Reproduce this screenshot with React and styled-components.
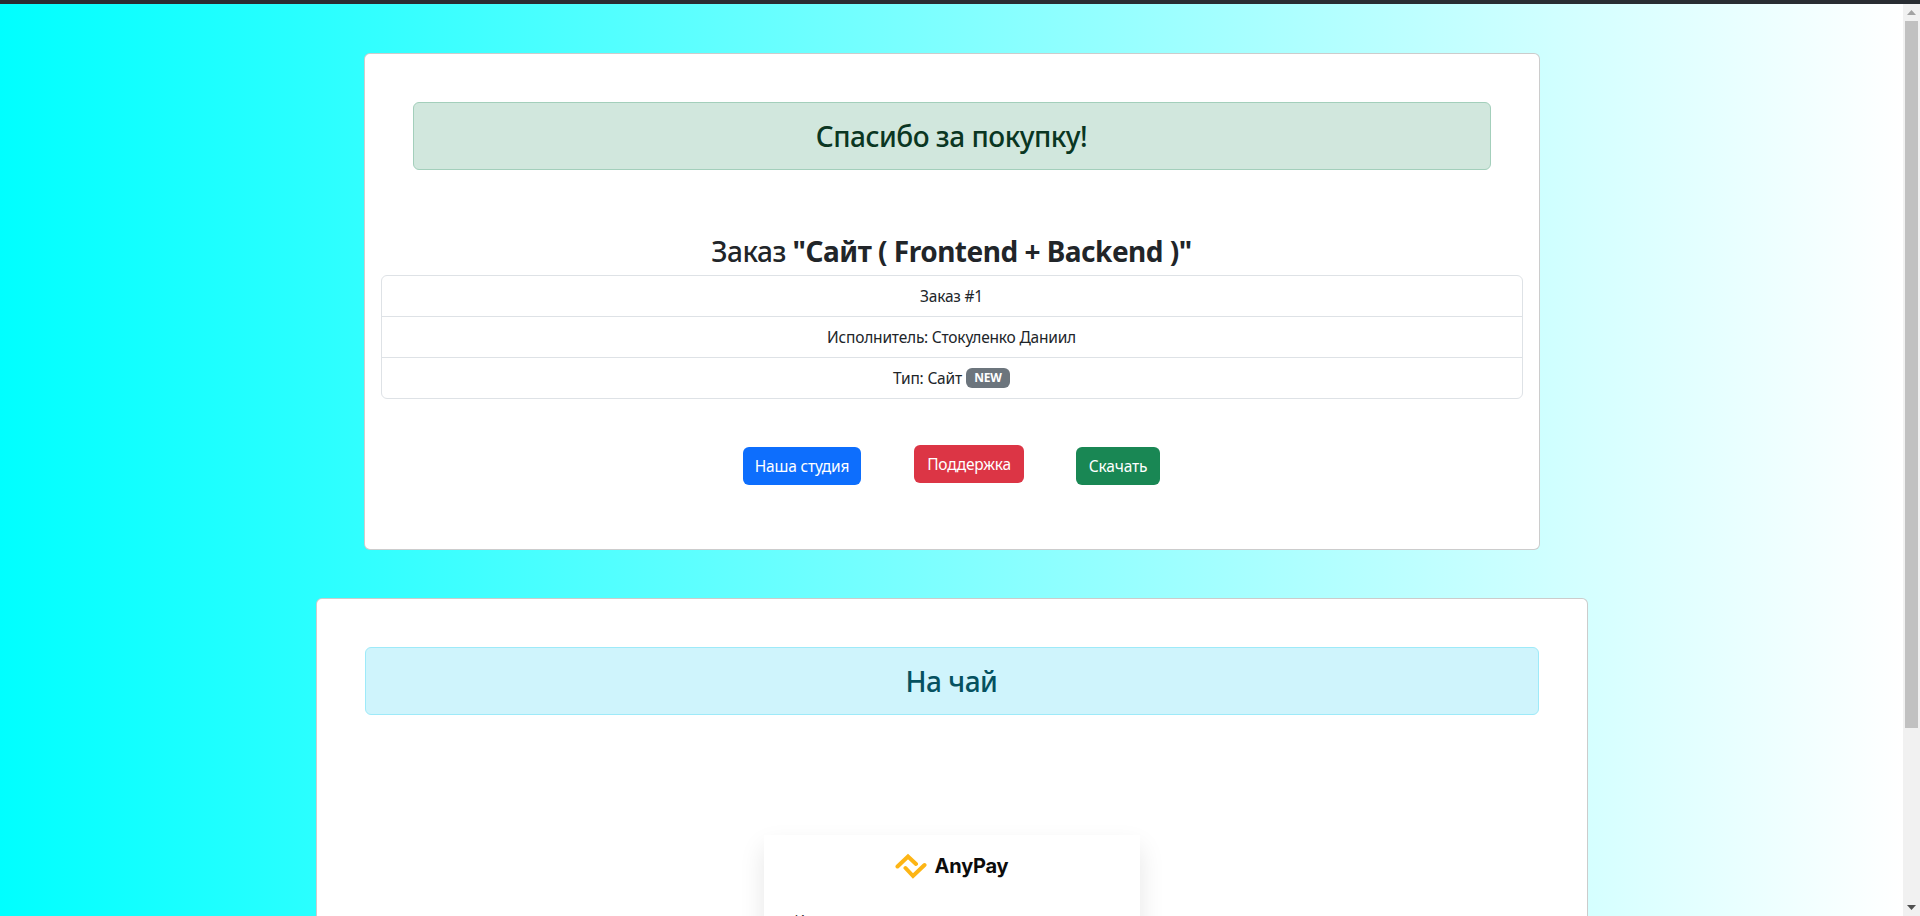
import React from "react";
import styled, { createGlobalStyle } from "styled-components";

const Global = createGlobalStyle`
  html, body { margin: 0; padding: 0; height: 916px; overflow: hidden; }
  * { box-sizing: border-box; }
  body { font-family: "Noto Sans", "Open Sans", sans-serif; color: #212529; font-size: 16px; }
`;

const Shell = styled.div`
  height: 916px;
  display: flex;
  flex-direction: column;
  overflow: hidden;
`;
const TopBar = styled.div`
  height: 4px;
  flex: none;
  background: #292d32;
`;
const Viewport = styled.div`
  flex: 1;
  min-height: 0;
  display: flex;
`;
const Page = styled.main`
  flex: 1;
  min-width: 0;
  overflow: hidden;
  background: linear-gradient(to right, #00ffff, #ffffff);
  padding-top: 49px;
  display: flex;
  flex-direction: column;
  align-items: center;
  gap: 48px;
`;
const Scrollbar = styled.div`
  width: 17px;
  flex: none;
  background: #f1f1f1;
  display: flex;
  flex-direction: column;
  align-items: center;
`;
const ScrollArrow = styled.svg`
  width: 17px;
  height: 17px;
  flex: none;
  display: block;
`;
const ScrollTrack = styled.div`
  flex: 1;
  width: 100%;
  padding: 0 2px;
`;
const ScrollThumb = styled.div`
  height: 707px;
  background: #c1c1c1;
`;
const Card = styled.section`
  width: ${(p) => p.$width}px;
  flex: none;
  background: #fff;
  border: 1px solid rgba(0, 0, 0, 0.2);
  border-radius: 6px;
  padding: 48px;
`;
const Alert = styled.div`
  border: 1px solid ${(p) => p.$border};
  background: ${(p) => p.$bg};
  color: ${(p) => p.$color};
  border-radius: 6px;
  height: 68px;
  display: flex;
  align-items: center;
  justify-content: center;
  font-size: 28px;
  font-weight: 500;
  letter-spacing: -0.5px;
`;
const OrderSection = styled.div`
  margin: 65px -32px 0;
`;
const Title = styled.h3`
  margin: 0 0 6px;
  font-size: 28px;
  line-height: 33.6px;
  font-weight: 500;
  text-align: center;
  letter-spacing: -0.5px;
`;
const List = styled.ul`
  list-style: none;
  margin: 0;
  padding: 0;
  border: 1px solid #dee2e6;
  border-radius: 6px;
`;
const Row = styled.li`
  height: 40px;
  display: flex;
  align-items: center;
  justify-content: center;
  gap: 4px;
  font-size: 15.5px;
  letter-spacing: -0.2px;
  & + & { border-top: 1px solid #dee2e6; height: 41px; }
`;
const Badge = styled.span`
  display: inline-flex;
  align-items: center;
  justify-content: center;
  width: 44px;
  height: 20px;
  background: #6c757d;
  color: #fff;
  border-radius: 6px;
  font-size: 12px;
  font-weight: 700;
`;
const Actions = styled.div`
  margin: 46px 0 16px;
  display: flex;
  justify-content: center;
  align-items: flex-start;
  gap: 52px;
`;
const Button = styled.a`
  display: flex;
  align-items: center;
  justify-content: center;
  height: 38px;
  width: ${(p) => p.$width}px;
  margin-top: ${(p) => p.$offset || 0}px;
  margin-right: ${(p) => p.$trail || 0}px;
  background: ${(p) => p.$bg};
  color: #fff;
  border-radius: 6px;
  font-size: 15.5px;
  letter-spacing: -0.2px;
`;
const Widget = styled.div`
  width: 376px;
  margin: 120px auto 0;
  height: 400px;
  background: #fff;
  box-shadow: 0 12px 24px rgba(0, 0, 0, 0.1);
  padding-top: 18px;
`;
const LogoRow = styled.div`
  display: flex;
  align-items: center;
  justify-content: center;
  gap: 8px;
`;
const LogoMark = styled.svg`
  width: 32px;
  height: 27px;
  display: block;
`;
const LogoText = styled.span`
  font-family: "Inter", sans-serif;
  font-size: 20px;
  font-weight: 700;
  color: #0c0c0c;
  letter-spacing: -0.2px;
`;
const FieldLabel = styled.div`
  margin: 30px 0 0 31px;
  font-size: 14px;
  color: #333;
`;

export default function App() {
  return (
    <Shell>
      <Global />
      <TopBar />
      <Viewport>
        <Page>
          <Card $width={1176}>
            <Alert $bg="#d1e7dd" $border="#a3cfbb" $color="#0a3622">Спасибо за покупку!</Alert>
            <OrderSection>
              <Title>
                Заказ <b>"Сайт ( Frontend + Backend )"</b>
              </Title>
              <List>
                <Row>Заказ #1</Row>
                <Row>Исполнитель: Стокуленко Даниил</Row>
                <Row>
                  Тип: Сайт <Badge>NEW</Badge>
                </Row>
              </List>
            </OrderSection>
            <Actions>
              <Button $bg="#0d6efd" $width={118} $offset={2} $trail={1}>Наша студия</Button>
              <Button $bg="#dc3545" $width={110}>Поддержка</Button>
              <Button $bg="#198754" $width={84} $offset={2}>Скачать</Button>
            </Actions>
          </Card>
          <Card $width={1272}>
            <Alert $bg="#cff4fc" $border="#9eeaf9" $color="#055160">На чай</Alert>
            <Widget>
              <LogoRow>
                <LogoMark viewBox="0 0 32 27" fill="none" stroke="#fdb515" strokeWidth="4" strokeLinecap="round" strokeLinejoin="miter">
                  <path d="M2.5 13.5 L13 3.5 L21 11" />
                  <path d="M10.5 15 L18 23 L29.5 12" />
                </LogoMark>
                <LogoText>AnyPay</LogoText>
              </LogoRow>
              <FieldLabel>Итого</FieldLabel>
            </Widget>
          </Card>
        </Page>
        <Scrollbar>
          <ScrollArrow viewBox="0 0 17 17"><path d="M8.5 6 L13 11 H4 Z" fill="#a3a3a3" /></ScrollArrow>
          <ScrollTrack><ScrollThumb /></ScrollTrack>
          <ScrollArrow viewBox="0 0 17 17"><path d="M4 6 H13 L8.5 11 Z" fill="#505050" /></ScrollArrow>
        </Scrollbar>
      </Viewport>
    </Shell>
  );
}
